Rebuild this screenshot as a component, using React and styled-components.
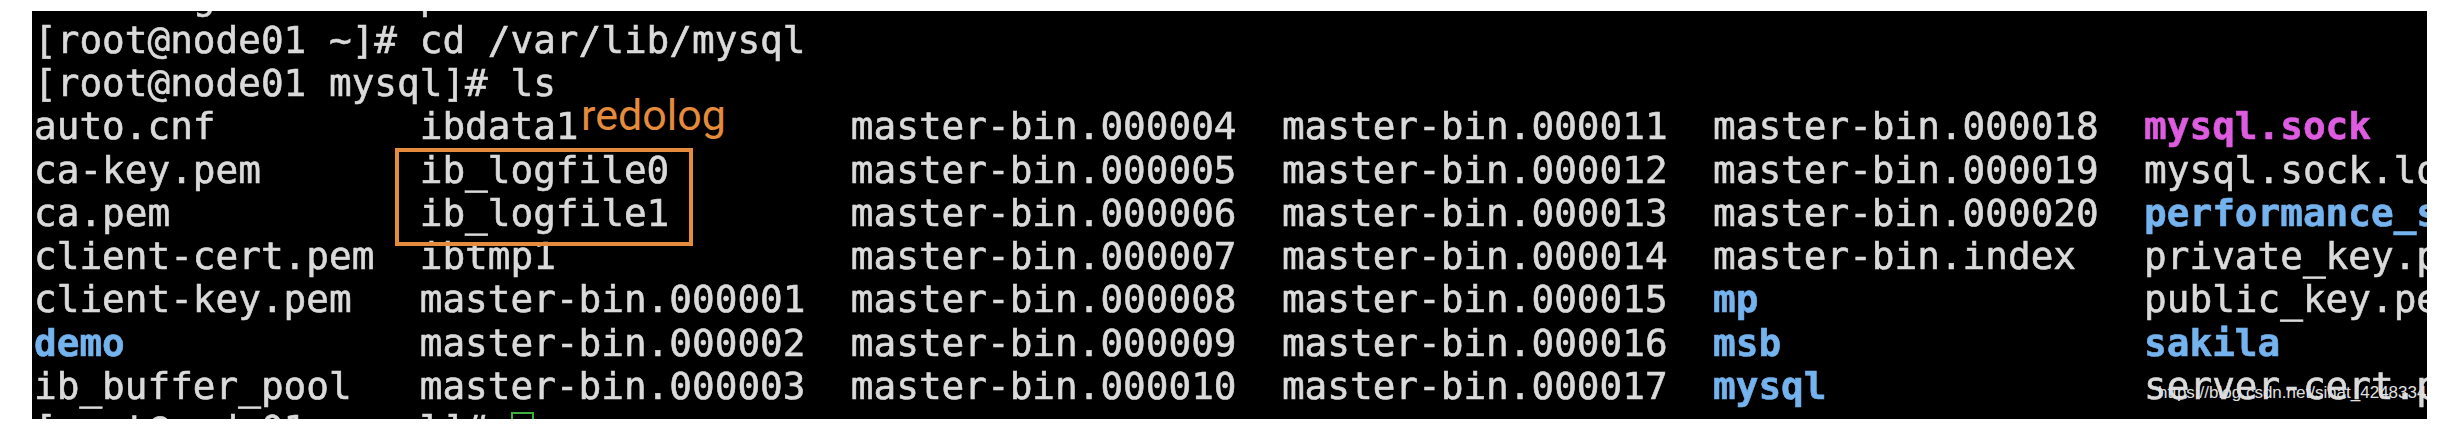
import React from "react";
import styled, { createGlobalStyle } from "styled-components";

const GlobalStyle = createGlobalStyle`
  body {
    margin: 0;
    background: #ffffff;
  }
`;

const Screen = styled.div`
  position: relative;
  margin: 11px 0 0 32px;
  width: 2395px;
  height: 408px;
  background: #000000;
  overflow: hidden;
`;

const Output = styled.div`
  margin-top: -35.6px;
  padding-left: 2px;
  font-family: "DejaVu Sans Mono", "Liberation Mono", monospace;
  font-size: 37.7px;
  line-height: 43.3px;
  color: #dadada;
  -webkit-text-stroke: 0.6px currentColor;
  filter: blur(0.35px);
`;

const Line = styled.div`
  height: 43.3px;
  white-space: pre;
`;

const ListRow = styled.div`
  display: flex;
  height: 43.3px;
  white-space: pre;
`;

const colors = {
  file: "#dadada",
  dir: "#74b3ee",
  sock: "#dd5ce0",
};

const Cell = styled.span`
  flex: 0 0 ${({ $w }) => $w}ch;
  color: ${({ $kind }) => colors[$kind]};
  font-weight: ${({ $kind }) => ($kind === "file" ? "normal" : "bold")};
`;

const Cursor = styled.span`
  display: inline-block;
  width: 0.85ch;
  height: 40px;
  margin-top: 4px;
  vertical-align: top;
  border: 2px solid #3daf3d;
`;

// annotations drawn over the terminal
const Note = styled.span`
  position: absolute;
  left: 549px;
  top: 83px;
  font-family: Roboto, "Liberation Sans", sans-serif;
  font-size: 43px;
  line-height: 1;
  color: #e48b3c;
`;

const Frame = styled.div`
  position: absolute;
  left: 363px;
  top: 137px;
  width: 290px;
  height: 90px;
  border: 4px solid #e48b3c;
`;

const Watermark = styled.span`
  position: absolute;
  left: 2126px;
  top: 373px;
  font-family: "Liberation Sans", Arial, sans-serif;
  font-size: 17px;
  line-height: 1;
  color: #e0e0e0;
  white-space: nowrap;
`;

const widths = [17, 19, 19, 19, 19, 24];

const f = (name) => ({ name, kind: "file" });
const d = (name) => ({ name, kind: "dir" });
const s = (name) => ({ name, kind: "sock" });

const listing = [
  [f("auto.cnf"), f("ibdata1"), f("master-bin.000004"), f("master-bin.000011"), f("master-bin.000018"), s("mysql.sock")],
  [f("ca-key.pem"), f("ib_logfile0"), f("master-bin.000005"), f("master-bin.000012"), f("master-bin.000019"), f("mysql.sock.lock")],
  [f("ca.pem"), f("ib_logfile1"), f("master-bin.000006"), f("master-bin.000013"), f("master-bin.000020"), d("performance_schema")],
  [f("client-cert.pem"), f("ibtmp1"), f("master-bin.000007"), f("master-bin.000014"), f("master-bin.index"), f("private_key.pem")],
  [f("client-key.pem"), f("master-bin.000001"), f("master-bin.000008"), f("master-bin.000015"), d("mp"), f("public_key.pem")],
  [d("demo"), f("master-bin.000002"), f("master-bin.000009"), f("master-bin.000016"), d("msb"), d("sakila")],
  [f("ib_buffer_pool"), f("master-bin.000003"), f("master-bin.000010"), f("master-bin.000017"), d("mysql"), f("server-cert.pem")],
];

export default function App() {
  return (
    <>
      <GlobalStyle />
      <Screen>
        <Output>
          <Line>{"       g         p"}</Line>
          <Line>[root@node01 ~]# cd /var/lib/mysql</Line>
          <Line>[root@node01 mysql]# ls</Line>
          {listing.map((row, i) => (
            <ListRow key={i}>
              {row.map((item, j) => (
                <Cell key={j} $w={widths[j]} $kind={item.kind}>
                  {item.name}
                </Cell>
              ))}
            </ListRow>
          ))}
          <Line>
            {"[root@node01 mysql]# "}
            <Cursor />
          </Line>
        </Output>
        <Note>redolog</Note>
        <Frame />
        <Watermark>https://blog.csdn.net/sinat_42483341</Watermark>
      </Screen>
    </>
  );
}
